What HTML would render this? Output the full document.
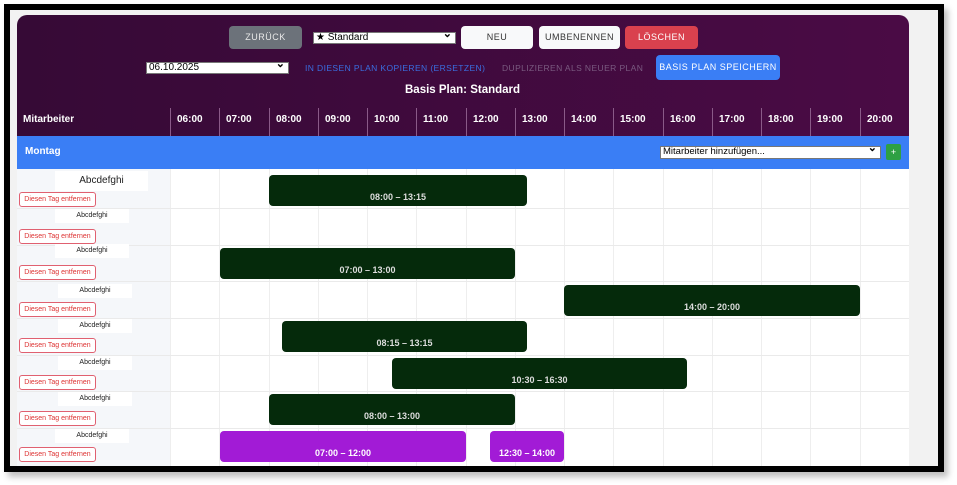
<!DOCTYPE html>
<html><head><meta charset="utf-8"><style>
*{box-sizing:border-box;margin:0;padding:0}
body{width:957px;height:485px;background:#fff;position:relative;overflow:hidden;font-family:"Liberation Sans",Arial,sans-serif}
.a{position:absolute}
.frame{left:4px;top:4px;width:940px;height:468px;border:6px solid #000;background:#f2f2f2;box-shadow:4px 5px 6px rgba(0,0,0,.25)}
.app{left:17px;top:15px;width:892px;height:451px;background:#fff;border-radius:10px 10px 0 0;overflow:hidden}
.hdr{left:0;top:0;width:892px;height:121px;background:linear-gradient(90deg,#360a36,#4a0b45)}
.btn{position:absolute;height:23px;border-radius:4px;font-size:9px;letter-spacing:.5px;text-align:center;line-height:23px}
.sel{position:absolute;background:#fff;border:1px solid #777;height:12px;font-size:10px;line-height:10px;padding-left:2px;color:#000}
.sel:after{content:"⌄";position:absolute;right:3px;top:-4px;font-size:11px;font-weight:bold}
.th{position:absolute;top:93px;height:28px;color:#fff;font-weight:bold;font-size:10px;padding:6px 0 0 6px;border-left:1px solid #8a5a88}
.day{left:0;top:121px;width:892px;height:33px;background:#3a7ef5}
.lc{left:0;top:154px;width:153px;height:297px;background:#f5f7fa}
.vl{position:absolute;top:154px;width:1px;height:297px;background:#eee}
.hl{position:absolute;left:0;width:892px;height:1px;background:#eaeaea}
.nm{position:absolute;background:#fff;font-size:7px;color:#222;text-align:center}
.rm{position:absolute;left:2px;width:77px;height:15px;border:1px solid #e06070;border-radius:3px;color:#d33;font-size:7px;text-align:center;line-height:13px;background:#fff}
.sh{position:absolute;height:31px;background:#052a0b;border-radius:4px;color:#ddd;font-size:9px;font-weight:bold;text-align:center;padding-top:17px}
.pu{background:#a21bd6;color:#fff}
</style></head><body>
<div class="a frame"></div>
<div class="a app">
<div class="a hdr"></div>
<div class="btn" style="left:212px;top:11px;width:73px;background:#6c727a;color:#e8e8e8">ZURÜCK</div>
<div class="sel" style="left:296px;top:17px;width:143px">★ Standard</div>
<div class="btn" style="left:444px;top:11px;width:72px;background:#f8f9fa;color:#333">NEU</div>
<div class="btn" style="left:522px;top:11px;width:81px;background:#f8f9fa;color:#333">UMBENENNEN</div>
<div class="btn" style="left:608px;top:11px;width:73px;background:#d9414e;color:#fff">LÖSCHEN</div>
<div class="sel" style="left:129px;top:47px;width:143px">06.10.2025</div>
<div class="a" style="left:288px;top:48px;font-size:8.5px;letter-spacing:.4px;color:#3a6de0">IN DIESEN PLAN KOPIEREN (ERSETZEN)</div>
<div class="a" style="left:485px;top:48px;font-size:8.5px;letter-spacing:.4px;color:#7a5a80">DUPLIZIEREN ALS NEUER PLAN</div>
<div class="btn" style="left:639px;top:40px;width:124px;height:25px;line-height:25px;background:#3a7ef5;color:#fff">BASIS PLAN SPEICHERN</div>
<div class="a" style="left:388px;top:69px;font-size:11.5px;font-weight:bold;color:#fff">Basis Plan: Standard</div>
<div class="th" style="left:0;width:153px;border-left:none">Mitarbeiter</div>
<div class="th" style="left:153px;width:49px">06:00</div>
<div class="th" style="left:202px;width:50px">07:00</div>
<div class="th" style="left:252px;width:49px">08:00</div>
<div class="th" style="left:301px;width:49px">09:00</div>
<div class="th" style="left:350px;width:49px">10:00</div>
<div class="th" style="left:399px;width:50px">11:00</div>
<div class="th" style="left:449px;width:49px">12:00</div>
<div class="th" style="left:498px;width:49px">13:00</div>
<div class="th" style="left:547px;width:49px">14:00</div>
<div class="th" style="left:596px;width:50px">15:00</div>
<div class="th" style="left:646px;width:49px">16:00</div>
<div class="th" style="left:695px;width:49px">17:00</div>
<div class="th" style="left:744px;width:49px">18:00</div>
<div class="th" style="left:793px;width:50px">19:00</div>
<div class="th" style="left:843px;width:49px">20:00</div>
<div class="a day"></div>
<div class="a" style="left:8px;top:131px;color:#fff;font-weight:bold;font-size:10px">Montag</div>
<div class="sel" style="left:643px;top:131px;width:221px;height:13px;font-size:9.5px">Mitarbeiter hinzufügen...</div>
<div class="a" style="left:869px;top:129px;width:15px;height:16px;background:#2ea043;border-radius:2px;color:#fff;font-size:9px;text-align:center;line-height:16px">+</div>
<div class="a lc"></div>
<div class="vl" style="left:153px"></div><div class="vl" style="left:202px"></div><div class="vl" style="left:252px"></div><div class="vl" style="left:301px"></div><div class="vl" style="left:350px"></div><div class="vl" style="left:399px"></div><div class="vl" style="left:449px"></div><div class="vl" style="left:498px"></div><div class="vl" style="left:547px"></div><div class="vl" style="left:596px"></div><div class="vl" style="left:646px"></div><div class="vl" style="left:695px"></div><div class="vl" style="left:744px"></div><div class="vl" style="left:793px"></div><div class="vl" style="left:843px"></div>
<div class="hl" style="top:193px"></div><div class="hl" style="top:230px"></div><div class="hl" style="top:266px"></div><div class="hl" style="top:303px"></div><div class="hl" style="top:340px"></div><div class="hl" style="top:376px"></div><div class="hl" style="top:413px"></div>
<div class="nm" style="left:38px;top:156px;width:93px;height:20px;font-size:10px;line-height:20px">Abcdefghi</div>
<div class="rm" style="top:177px">Diesen Tag entfernen</div>
<div class="nm" style="left:38px;top:194px;width:74px;height:14px;line-height:14px">Abcdefghi</div>
<div class="rm" style="top:214px">Diesen Tag entfernen</div>
<div class="nm" style="left:38px;top:229px;width:74px;height:14px;line-height:14px">Abcdefghi</div>
<div class="rm" style="top:250px">Diesen Tag entfernen</div>
<div class="nm" style="left:41px;top:269px;width:74px;height:14px;line-height:14px">Abcdefghi</div>
<div class="rm" style="top:287px">Diesen Tag entfernen</div>
<div class="nm" style="left:41px;top:304px;width:74px;height:14px;line-height:14px">Abcdefghi</div>
<div class="rm" style="top:323px">Diesen Tag entfernen</div>
<div class="nm" style="left:41px;top:341px;width:74px;height:14px;line-height:14px">Abcdefghi</div>
<div class="rm" style="top:360px">Diesen Tag entfernen</div>
<div class="nm" style="left:41px;top:377px;width:74px;height:14px;line-height:14px">Abcdefghi</div>
<div class="rm" style="top:396px">Diesen Tag entfernen</div>
<div class="nm" style="left:38px;top:414px;width:74px;height:14px;line-height:14px">Abcdefghi</div>
<div class="rm" style="top:432px">Diesen Tag entfernen</div>
<div class="sh" style="left:252px;top:160px;width:258px">08:00 – 13:15</div>
<div class="sh" style="left:203px;top:233px;width:295px">07:00 – 13:00</div>
<div class="sh" style="left:547px;top:270px;width:296px">14:00 – 20:00</div>
<div class="sh" style="left:265px;top:306px;width:245px">08:15 – 13:15</div>
<div class="sh" style="left:375px;top:343px;width:295px">10:30 – 16:30</div>
<div class="sh" style="left:252px;top:379px;width:246px">08:00 – 13:00</div>
<div class="sh pu" style="left:203px;top:416px;width:246px">07:00 – 12:00</div>
<div class="sh pu" style="left:473px;top:416px;width:74px">12:30 – 14:00</div>
</div>
</body></html>
